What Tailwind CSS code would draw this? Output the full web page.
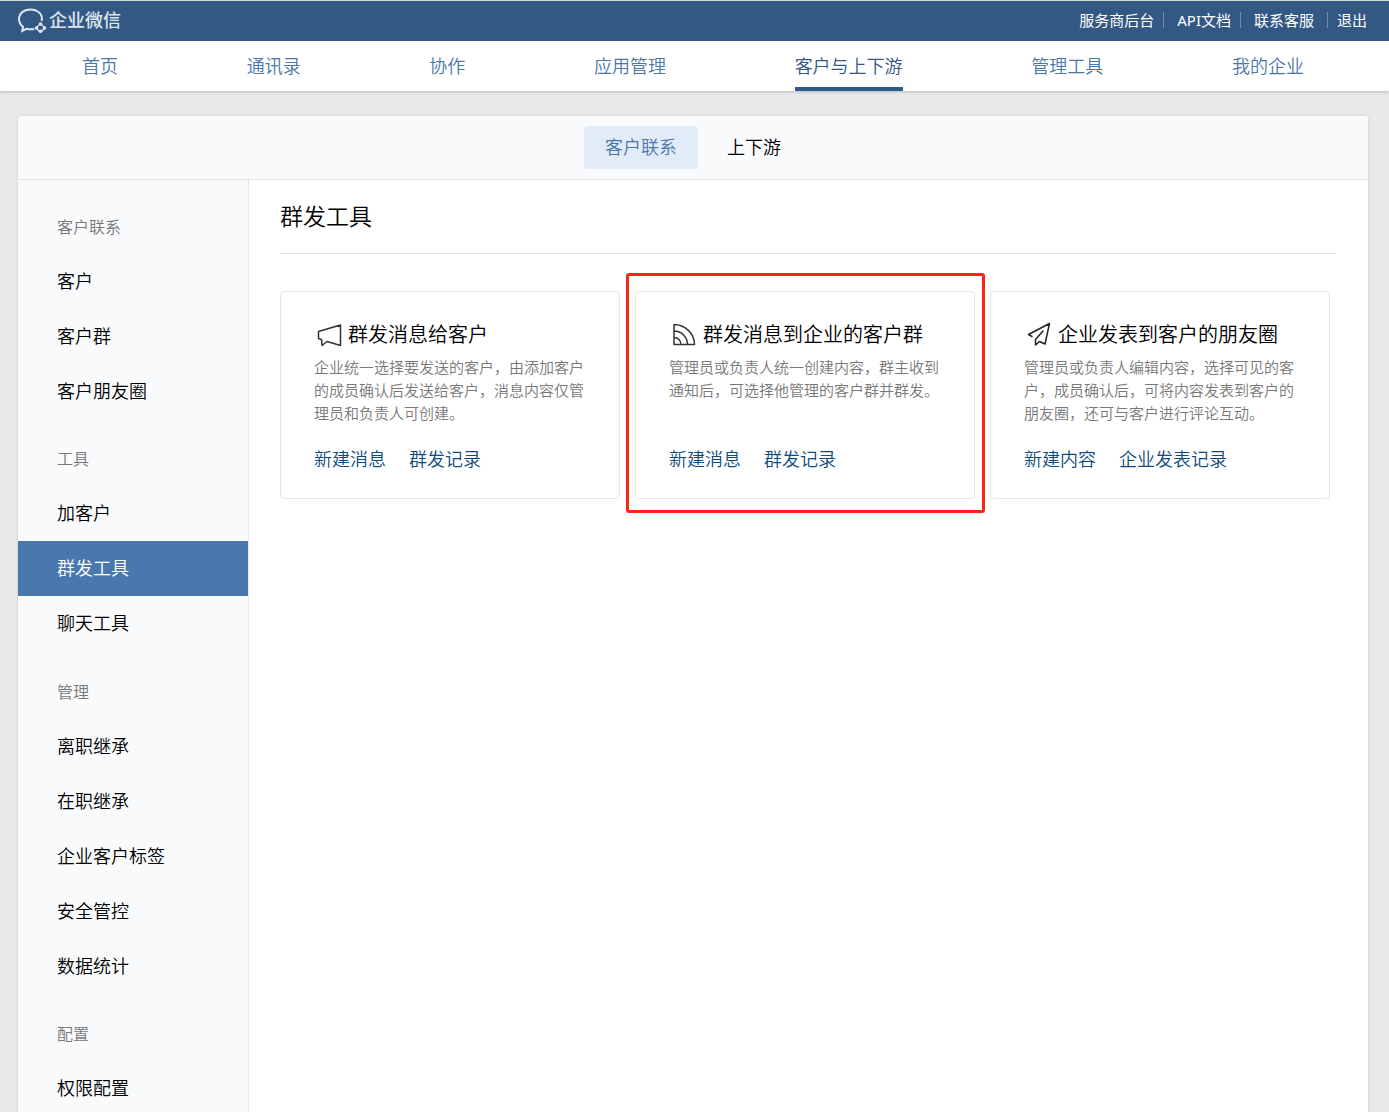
<!DOCTYPE html>
<html lang="zh-CN">
<head>
<meta charset="utf-8">
<meta name="viewport" content="width=device-width, initial-scale=1">
<title>企业微信 - 群发工具</title>
<script src="https://cdn.jsdelivr.net/npm/@tailwindcss/browser@4"></script>
</head>
<body class="flex min-h-screen flex-col bg-[#e8e9eb] font-['Noto_Sans','Noto_Sans_CJK_SC',sans-serif] text-lg leading-6 font-[350] text-black">
  <header class="flex h-[41px] items-center justify-between border-t border-[#d5dbdb] bg-[#335883] pr-[22px] pb-0.5 pl-[17px]">
    <a href="#" class="flex items-center gap-0.5 font-medium text-[#dde5ee]">
      <svg class="h-[26px] w-[30px]" viewBox="0 0 30 26" fill="none" stroke="currentColor" stroke-width="2">
        <path d="M24.600 14C26.300 7 20.400 2.500 13.200 2.500 6.600 2.500 2 6.800 2 12.100c0 3.400 1.700 6 4 7.800L5.200 23.900l4.300-2.100c2.600.700 5 .700 7.700.200"/>
        <path d="M23.500 16.500l4.500 4.500-4.500 4.500-4.500-4.500z" stroke-width="1.200"/>
        <g fill="currentColor" stroke="none"><circle cx="23.500" cy="17" r="1.800"/><circle cx="27.500" cy="21" r="1.800"/><circle cx="23.500" cy="24.200" r="1.800"/><circle cx="19.500" cy="21" r="1.800"/></g>
      </svg>
      <span>企业微信</span>
    </a>
    <nav aria-label="账号" class="flex items-center text-[15px] font-normal text-white">
      <a href="#">服务商后台</a>
      <span class="mr-[13px] ml-[9px] h-4 w-px bg-[#7089a8]"></span>
      <a href="#">API文档</a>
      <span class="mr-[13px] ml-[9px] h-4 w-px bg-[#7089a8]"></span>
      <a href="#">联系客服</a>
      <span class="mr-[9px] ml-[13px] h-4 w-px bg-[#7089a8]"></span>
      <a href="#">退出</a>
    </nav>
  </header>

  <nav aria-label="主导航" class="flex h-[50px] items-stretch justify-between bg-white pr-[85px] pl-[82px] leading-[50px] text-[#4b76a9] shadow-[0_1px_3px_rgba(0,0,0,0.2)]">
    <a href="#">首页</a>
    <a href="#">通讯录</a>
    <a href="#">协作</a>
    <a href="#">应用管理</a>
    <a href="#" aria-current="page" class="border-b-4 border-[#2d5a88] text-[#335883]">客户与上下游</a>
    <a href="#">管理工具</a>
    <a href="#">我的企业</a>
  </nav>

  <div class="mt-[25px] mr-[21px] ml-[18px] flex grow flex-col overflow-hidden rounded-t bg-white shadow-[0_0_3px_rgba(0,0,0,0.15)]">
    <div class="flex h-16 items-center justify-center gap-2 border-b border-[#e4e6e9] bg-[#f9fafc]">
      <button type="button" class="h-[43px] rounded bg-[#e1ecf8] px-[21px] pb-0.5 text-[#4b76a9]">客户联系</button>
      <button type="button" class="h-[43px] rounded px-[21px] pb-0.5">上下游</button>
    </div>

    <div class="flex grow">
      <aside class="flex w-[231px] shrink-0 flex-col gap-[13px] border-r border-dotted border-[#d5d8dc] bg-[#f9fafc] pt-5 leading-[55px]">
        <section>
          <h2 class="pl-[39px] text-base leading-[54px] text-[#787878]">客户联系</h2>
          <a href="#" class="block pl-[39px]">客户</a>
          <a href="#" class="block pl-[39px]">客户群</a>
          <a href="#" class="block pl-[39px]">客户朋友圈</a>
        </section>
        <section>
          <h2 class="pl-[39px] text-base leading-[54px] text-[#787878]">工具</h2>
          <a href="#" class="block pl-[39px]">加客户</a>
          <a href="#" aria-current="page" class="block bg-[#4a78ae] pl-[39px] text-white">群发工具</a>
          <a href="#" class="block pl-[39px]">聊天工具</a>
        </section>
        <section class="pt-px">
          <h2 class="pl-[39px] text-base leading-[54px] text-[#787878]">管理</h2>
          <a href="#" class="block pl-[39px]">离职继承</a>
          <a href="#" class="block pl-[39px]">在职继承</a>
          <a href="#" class="block pl-[39px]">企业客户标签</a>
          <a href="#" class="block pl-[39px]">安全管控</a>
          <a href="#" class="block pl-[39px]">数据统计</a>
        </section>
        <section>
          <h2 class="pl-[39px] text-base leading-[54px] text-[#787878]">配置</h2>
          <a href="#" class="block pl-[39px]">权限配置</a>
        </section>
      </aside>

      <main class="grow pr-8 pl-[31px]">
        <h1 class="h-[74px] border-b border-[#dfe0e2] text-[23px] leading-[72px]">群发工具</h1>
        <div class="mt-[37px] grid grid-cols-3 gap-[15px] pr-1.5">
          <article class="rounded border border-[#e4e6e9] px-[33px] pt-[29px] pb-[27px]">
            <h2 class="flex items-center gap-1.5 pl-0.5 text-xl leading-7">
              <svg class="size-[26px] shrink-0" viewBox="0 0 26 26" fill="none" stroke="#333" stroke-width="1.500" stroke-linejoin="round"><path d="M2.500 9.500L24.500 3v20.500l-13.500-4-5 4-.500-6-3-1z"/></svg>
              群发消息给客户
            </h2>
            <p class="mt-[7px] min-h-[69px] text-[15px] leading-[23px] text-[#787878]">企业统一选择要发送的客户，由添加客户的成员确认后发送给客户，消息内容仅管理员和负责人可创建。</p>
            <div class="mt-[22px] flex gap-[23px] text-[#0d4a80]"><a href="#">新建消息</a><a href="#">群发记录</a></div>
          </article>

          <article class="relative rounded border border-[#e4e6e9] px-[33px] pt-[29px] pb-[27px]">
            <span class="pointer-events-none absolute -top-[19px] -right-[11px] -bottom-[15px] -left-[10px] rounded-[3px] border-3 border-[#ff2216]"></span>
            <h2 class="flex items-center gap-1.5 pl-0.5 text-xl leading-7">
              <svg class="size-[26px] shrink-0" viewBox="0 0 26 26" fill="none" stroke="#333" stroke-width="1.500" stroke-linejoin="round"><path d="M3 2.500v20h20.500C23.500 11.500 14 2.500 3 2.500zM3 9c7.500 0 13.500 6 13.500 13.500M3 15.500c4 0 7 3 7 7"/></svg>
              群发消息到企业的客户群
            </h2>
            <p class="mt-[7px] min-h-[69px] text-[15px] leading-[23px] text-[#787878]">管理员或负责人统一创建内容，群主收到通知后，可选择他管理的客户群并群发。</p>
            <div class="mt-[22px] flex gap-[23px] text-[#0d4a80]"><a href="#">新建消息</a><a href="#">群发记录</a></div>
          </article>

          <article class="rounded border border-[#e4e6e9] px-[33px] pt-[29px] pb-[27px]">
            <h2 class="flex items-center gap-1.5 pl-0.5 text-xl leading-7">
              <svg class="size-[26px] shrink-0" viewBox="0 0 26 26" fill="none" stroke="#222" stroke-width="1.500" stroke-linejoin="round" stroke-linecap="round"><path d="M6 14.500L2.500 12.500 23.500 1.500 19 22l-5.500-2.500L9.500 23v-5.500L17 9"/></svg>
              企业发表到客户的朋友圈
            </h2>
            <p class="mt-[7px] min-h-[69px] text-[15px] leading-[23px] text-[#787878]">管理员或负责人编辑内容，选择可见的客户，成员确认后，可将内容发表到客户的朋友圈，还可与客户进行评论互动。</p>
            <div class="mt-[22px] flex gap-[23px] text-[#0d4a80]"><a href="#">新建内容</a><a href="#">企业发表记录</a></div>
          </article>
        </div>
      </main>
    </div>
  </div>
</body>
</html>
